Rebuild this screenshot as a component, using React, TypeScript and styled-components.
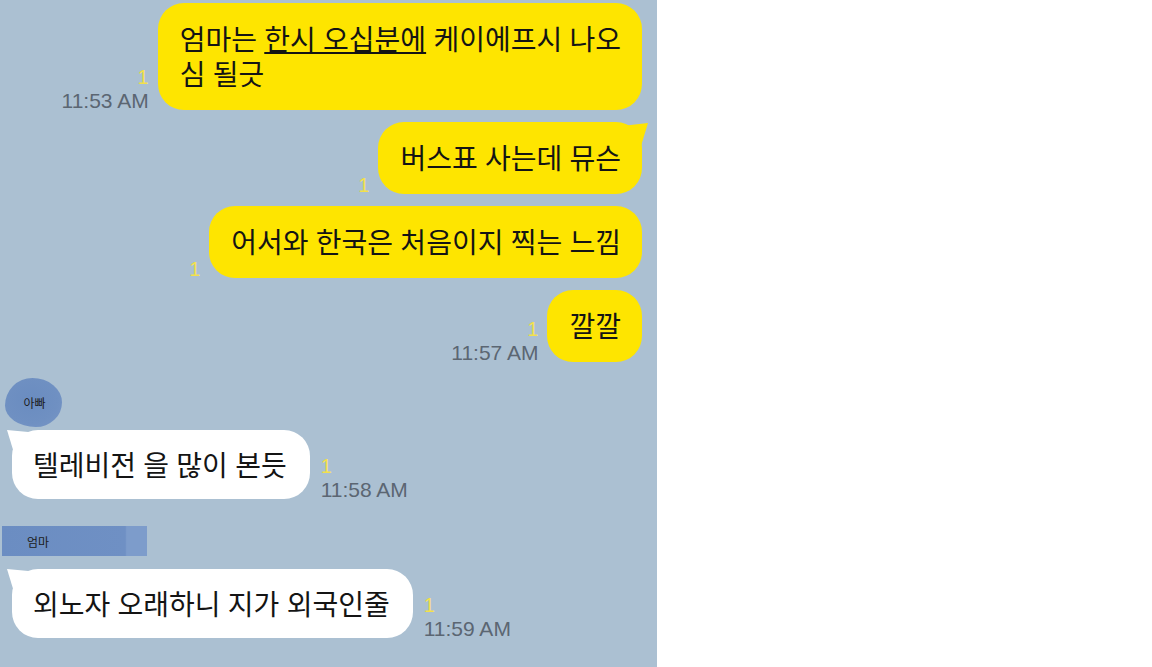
import React, { FC } from 'react'
import styled, { createGlobalStyle, css } from 'styled-components'

const GlobalStyle = createGlobalStyle`
  html, body {
    margin: 0;
    padding: 0;
    background: #ffffff;
  }
  body {
    font-family: 'Noto Sans CJK KR', 'Noto Sans', sans-serif;
  }
`

const Page = styled.div`
  display: flex;
  width: 1152px;
  height: 667px;
  overflow: hidden;
`

const ChatPane = styled.div`
  width: 657px;
  height: 667px;
  flex-shrink: 0;
  background: #abc0d2;
  display: flex;
  flex-direction: column;
  padding-top: 3px;
  box-sizing: border-box;
`

const Row = styled.div<{ $mine?: boolean; $top?: number }>`
  display: flex;
  align-items: flex-end;
  flex-direction: ${p => (p.$mine ? 'row-reverse' : 'row')};
  gap: ${p => (p.$mine ? 9 : 11)}px;
  padding: ${p => (p.$mine ? '0 15px 0 0' : '0 0 0 12px')};
  margin-top: ${p => p.$top ?? 0}px;
`

const Bubble = styled.div<{ $mine?: boolean; $tail?: boolean }>`
  position: relative;
  background: ${p => (p.$mine ? '#fee500' : '#ffffff')};
  color: #141414;
  border-radius: 26px;
  padding: ${p => (p.$mine ? '18px 21px 19px 22px' : '17px 23px 17px 21px')};
  font-size: 28px;
  line-height: 35px;
  word-spacing: 1px;
  white-space: nowrap;

  u {
    text-decoration-thickness: 2px;
    text-underline-offset: 2px;
  }

  ${p =>
    p.$tail &&
    (p.$mine
      ? css`
          &::before {
            content: '';
            position: absolute;
            top: 1px;
            right: -6px;
            width: 24px;
            height: 22px;
            background: #fee500;
            clip-path: polygon(0 12%, 100% 0, 72% 100%, 0 100%);
          }
        `
      : css`
          &::before {
            content: '';
            position: absolute;
            top: 0;
            left: -5px;
            width: 24px;
            height: 22px;
            background: #ffffff;
            clip-path: polygon(0 0, 100% 10%, 100% 100%, 28% 100%);
          }
        `)}
`

const Meta = styled.div<{ $mine?: boolean }>`
  display: flex;
  flex-direction: column;
  align-items: ${p => (p.$mine ? 'flex-end' : 'flex-start')};
  margin-bottom: -2px;
`

const Unread = styled.span`
  font-family: 'Liberation Sans', Arial, sans-serif;
  font-size: 20px;
  line-height: 22px;
  color: #f3e04c;
`

const Time = styled.span`
  font-family: 'Liberation Sans', Arial, sans-serif;
  font-size: 21px;
  line-height: 22px;
  color: #5b6672;
  margin-top: 2px;
`

const AvatarBlob = styled.div`
  margin: 16px 0 0 5px;
  width: 57px;
  height: 49px;
  display: flex;
  align-items: center;
  justify-content: center;
  background: radial-gradient(ellipse at 45% 45%, #6a8cc0 0%, #6f90c2 60%, #7896c6 100%);
  border-radius: 48% 52% 46% 54% / 56% 50% 50% 44%;
  font-size: 12px;
  color: #1b1b1b;
  padding-left: 2px;
  box-sizing: border-box;
`

const NameBar = styled.div`
  margin: 27px 0 0 2px;
  width: 145px;
  height: 30px;
  display: flex;
  align-items: center;
  padding-left: 25px;
  box-sizing: border-box;
  background: linear-gradient(90deg, #6b8dc2 0%, #6f90c4 85%, #7d9ccb 86%, #7d9ccb 100%);
  font-size: 12px;
  color: #1b1b1b;
`

const Blank = styled.div`
  flex: 1;
  background: #ffffff;
`

type Msg = {
  mine: boolean
  text: React.ReactNode
  time?: string
  tail?: boolean
  top: number
}

const Message: FC<Msg> = ({ mine, text, time, tail, top }) => (
  <Row $mine={mine} $top={top}>
    <Bubble $mine={mine} $tail={tail}>
      {text}
    </Bubble>
    <Meta $mine={mine}>
      <Unread>1</Unread>
      {time && <Time>{time}</Time>}
    </Meta>
  </Row>
)

const App: FC = () => (
  <Page>
    <GlobalStyle />
    <ChatPane>
      <Message
        mine
        top={0}
        time="11:53 AM"
        text={
          <>
            엄마는 <u>한시 오십분에</u> 케이에프시 나오
            <br />
            심 될긋
          </>
        }
      />
      <Message mine tail top={12} text="버스표 사는데 뮤슨" />
      <Message mine top={12} text="어서와 한국은 처음이지 찍는 느낌" />
      <Message mine top={12} time="11:57 AM" text="깔깔" />

      <AvatarBlob>아빠</AvatarBlob>
      <Message mine={false} tail top={3} time="11:58 AM" text="텔레비전 을 많이 본듯" />

      <NameBar>엄마</NameBar>
      <Message mine={false} tail top={13} time="11:59 AM" text="외노자 오래하니 지가 외국인줄" />
    </ChatPane>
    <Blank />
  </Page>
)

export default App
